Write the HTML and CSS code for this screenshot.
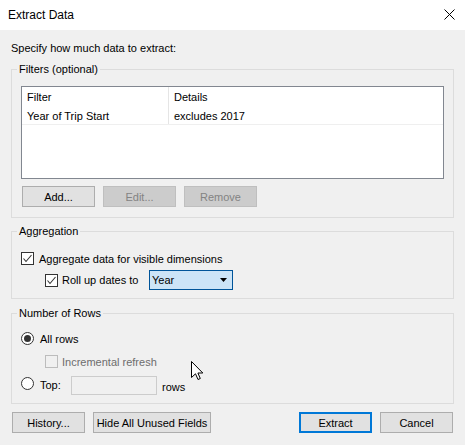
FILE: index.html
```html
<!DOCTYPE html>
<html>
<head>
<meta charset="utf-8">
<title>Extract Data</title>
<link rel="stylesheet" href="styles.css">
</head>
<body>
<div class="titlebar">
  <span class="title">Extract Data</span>
  <svg class="close" width="11" height="11" viewBox="0 0 11 11"><path d="M0.5 0.5 L10.5 10.5 M10.5 0.5 L0.5 10.5" stroke="#000" stroke-width="1" fill="none"/></svg>
</div>
<div class="content">
  <div class="intro">Specify how much data to extract:</div>

  <fieldset class="group filters">
    <legend>Filters (optional)</legend>
    <div class="listbox">
      <div class="lrow head"><div class="c1">Filter</div><div class="c2">Details</div></div>
      <div class="lrow item"><div class="c1">Year of Trip Start</div><div class="c2">excludes 2017</div></div>
    </div>
    <div class="btnrow">
      <button class="btn">Add...</button>
      <button class="btn" disabled>Edit...</button>
      <button class="btn" disabled>Remove</button>
    </div>
  </fieldset>

  <fieldset class="group agg">
    <legend>Aggregation</legend>
    <div class="row r1">
      <span class="cb"><svg width="11" height="11" viewBox="0 0 11 11"><path d="M1.5 5.5 L4 8.5 L9.5 2" stroke="#333" stroke-width="1.1" fill="none"/></svg></span>
      <span class="lbl">Aggregate data for visible dimensions</span>
    </div>
    <div class="row r2">
      <span class="cb"><svg width="11" height="11" viewBox="0 0 11 11"><path d="M1.5 5.5 L4 8.5 L9.5 2" stroke="#333" stroke-width="1.1" fill="none"/></svg></span>
      <span class="lbl rollup">Roll up dates to</span>
      <div class="combo"><span>Year</span><svg width="7" height="4" viewBox="0 0 7 4"><path d="M0 0 L7 0 L3.5 4 Z" fill="#000"/></svg></div>
    </div>
  </fieldset>

  <fieldset class="group rows">
    <legend>Number of Rows</legend>
    <div class="row n1">
      <span class="radio on"><span class="dot"></span></span>
      <span class="lbl">All rows</span>
    </div>
    <div class="row n2">
      <span class="cb off"></span>
      <span class="lbl gray">Incremental refresh</span>
    </div>
    <div class="row n3">
      <span class="radio"></span>
      <span class="lbl top">Top:</span>
      <span class="tbox"></span>
      <span class="lbl unit">rows</span>
    </div>
  </fieldset>

  <div class="bottom">
    <button class="btn">History...</button>
    <button class="btn wide">Hide All Unused Fields</button>
    <span class="spacer"></span>
    <button class="btn default">Extract</button>
    <button class="btn">Cancel</button>
  </div>
</div>
<svg class="cursor" width="14" height="21" viewBox="0 0 14 21"><path d="M0.5 0.5 L0.5 16.5 L4.5 12.8 L7 18.5 L9.3 17.5 L6.9 12 L11.8 12 Z" fill="#fff" stroke="#000" stroke-width="1" stroke-linejoin="miter"/></svg>
</body>
</html>
```
FILE: styles.css
```css
html, body {
  margin: 0;
  padding: 0;
}
body {
  width: 465px;
  height: 445px;
  background: #f0f0f0;
  font-family: "Liberation Sans", Arial, sans-serif;
  font-size: 11px;
  color: #000;
  overflow: hidden;
  position: relative;
}
.titlebar {
  height: 30px;
  background: #fff;
  display: flex;
  align-items: center;
  justify-content: space-between;
  padding: 0 10px 0 8px;
}
.title {
  font-size: 12px;
  line-height: 16px;
}
.close {
  display: block;
  margin-top: -2px;
}
.content {
  padding: 0 11px;
}
.intro {
  margin-top: 10px;
  line-height: 16px;
}
.group {
  margin: 0;
  border: 1px solid #dcdcdc;
  padding: 9px 9px 10px 9px;
  min-width: 0;
}
.group legend {
  padding: 0 2px;
  margin-left: -4px;
  line-height: 15px;
}
.filters {
  margin-top: 6px;
}
.listbox {
  height: 93px;
  box-sizing: border-box;
  border: 1px solid #828790;
  background: #fff;
}
.lrow {
  display: flex;
}
.lrow .c1 {
  width: 147px;
  box-sizing: border-box;
  border-right: 1px solid #e5e5e5;
  padding-left: 5px;
}
.lrow .c2 {
  flex: 1;
  padding-left: 5px;
}
.lrow.head {
  height: 21px;
  line-height: 21px;
}
.lrow.item {
  height: 17px;
  line-height: 16px;
  box-sizing: border-box;
  border-bottom: 1px solid #efefef;
}
.btnrow {
  display: flex;
  gap: 8px;
  margin-top: 7px;
  padding-left: 1px;
}
.btn {
  width: 73px;
  height: 21px;
  box-sizing: border-box;
  border: 1px solid #adadad;
  background: #e1e1e1;
  font-family: inherit;
  font-size: 11px;
  color: #000;
  padding: 0;
  margin: 0;
}
.btn:disabled {
  background: #cccccc;
  border-color: #bfbfbf;
  color: #838383;
}
.btn.wide {
  width: 118px;
}
.btn.default {
  border: 2px solid #0078d7;
}
.agg {
  margin-top: 6px;
  padding: 13px 9px 8px 9px;
}
.row {
  display: flex;
  align-items: center;
}
.cb {
  width: 13px;
  height: 13px;
  box-sizing: border-box;
  border: 1px solid #333;
  background: #fff;
  display: flex;
  flex: none;
}
.cb svg {
  display: block;
}
.cb.off {
  border-color: #bcbcbc;
  background: #f0f0f0;
}
.lbl {
  margin-left: 5px;
  line-height: 16px;
}
.r1 {
  height: 13px;
}
.r2 {
  height: 20px;
  margin-top: 5px;
  padding-left: 24px;
}
.r2 .lbl, .n2 .lbl {
  margin-left: 4px;
}
.rollup {
  width: 87px;
}
.combo {
  width: 84px;
  height: 20px;
  box-sizing: border-box;
  border: 1px solid #005499;
  background: #cce4f7;
  display: flex;
  align-items: center;
  justify-content: space-between;
  padding: 0 5px 0 2px;
}
.combo svg {
  display: block;
}
.rows {
  margin-top: 7px;
  padding: 11px 9px 8px 9px;
}
.radio {
  width: 13px;
  height: 13px;
  box-sizing: border-box;
  border: 1px solid #333;
  border-radius: 50%;
  background: #fff;
  display: flex;
  align-items: center;
  justify-content: center;
  flex: none;
}
.radio .dot {
  width: 7px;
  height: 7px;
  border-radius: 50%;
  background: #333;
}
.n1 {
  height: 13px;
}
.n1 .lbl, .n3 .lbl {
  margin-left: 6px;
}
.n2 {
  height: 13px;
  margin-top: 10px;
  padding-left: 24px;
}
.gray {
  color: #6d6d6d;
}
.n3 {
  height: 19px;
  margin-top: 8px;
  align-items: flex-start;
}
.n3 .radio {
  margin-top: 1px;
}
.n3 .lbl {
  line-height: 16px;
  padding-top: 1px;
}
.n3 .top {
  width: 31px;
}
.tbox {
  width: 86px;
  height: 19px;
  box-sizing: border-box;
  border: 1px solid #cccccc;
  background: #f0f0f0;
  flex: none;
}
.n3 .unit {
  margin-left: 5px;
  padding-top: 3px;
}
.bottom {
  display: flex;
  gap: 8px;
  margin-top: 8px;
  padding: 0 1px;
}
.spacer {
  flex: 1;
}
.cursor {
  position: absolute;
  left: 191px;
  top: 361px;
}
```
